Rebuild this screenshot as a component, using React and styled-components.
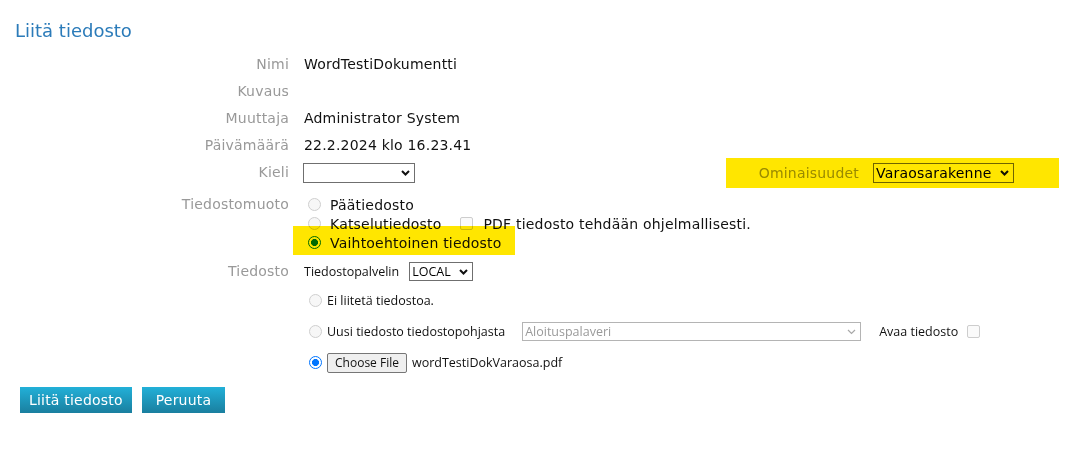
import React from 'react';
import styled, { createGlobalStyle, css } from 'styled-components';

const GlobalStyle = createGlobalStyle`
  html, body {
    margin: 0;
    background: #fff;
  }
  body {
    font-family: "DejaVu Sans", Verdana, sans-serif;
    font-size: 14px;
    letter-spacing: 0.2px;
    color: #111;
  }
`;

const Page = styled.div`
  width: 1069px;
  height: 469px;
  overflow: hidden;
`;

const Title = styled.h1`
  margin: 0;
  padding: 21px 15px 0;
  font-size: 18px;
  font-weight: normal;
  letter-spacing: 0;
  line-height: 19px;
  color: #2b7bb9;
`;

const Form = styled.div`
  margin-top: 11px;
`;

const Row = styled.div`
  display: grid;
  grid-template-columns: 289px 1fr;
  column-gap: 15px;
  align-items: ${p => (p.$top ? 'start' : 'center')};
  min-height: 27px;
  padding: ${p => p.$pad || '0'};
  padding-right: 10px;
`;

const Label = styled.div`
  text-align: right;
  color: #999;
  line-height: ${p => p.$lh || 27}px;
  white-space: nowrap;
`;

const Value = styled.div`
  line-height: 27px;
  white-space: nowrap;
`;

const Split = styled.div`
  display: flex;
  align-items: center;
  justify-content: space-between;
  margin-left: -1px;
`;

const highlight = css`
  position: relative;
  &::after {
    content: '';
    position: absolute;
    background: #ffe600;
    mix-blend-mode: multiply;
    pointer-events: none;
  }
`;

const PropsBox = styled.div`
  ${highlight}
  display: flex;
  align-items: center;
  gap: 14px;
  height: 27px;
  padding: 0 45px 0 33px;
  color: #999;
  &::after {
    inset: -1px 0 -2px 0;
  }
`;

const Options = styled.div`
  display: flex;
  flex-direction: column;
`;

const Option = styled.label`
  display: flex;
  align-items: center;
  height: 19px;
  white-space: nowrap;
  ${p =>
    p.$marked &&
    css`
      ${highlight}
      &::after {
        left: -11px;
        top: -7px;
        width: 222px;
        height: 29px;
      }
    `}
`;

const Radio = styled.input.attrs({ type: 'radio' })`
  appearance: none;
  box-sizing: border-box;
  width: 13px;
  height: 13px;
  margin: 0 ${p => (p.$small ? 5 : 9)}px 0 ${p => (p.$small ? 5 : 4)}px;
  border-radius: 50%;
  border: 1px solid #cfcfcf;
  background: #f7f7f7;
  flex: none;
  &:checked {
    border: 1.5px solid #0075ff;
    background: radial-gradient(circle, #0075ff 0 3.2px, #fff 3.8px);
  }
`;

const Check = styled.input.attrs({ type: 'checkbox' })`
  appearance: none;
  box-sizing: border-box;
  width: 13px;
  height: 13px;
  margin: 0 ${p => p.$right || 0}px 0 ${p => p.$left || 0}px;
  border-radius: 2px;
  border: 1px solid #cdcdcd;
  background: #fafafa;
  flex: none;
`;

const SelectWrap = styled.span`
  position: relative;
  display: inline-flex;
  align-items: center;
  margin-left: ${p => p.$left || 0}px;
  svg {
    position: absolute;
    right: 5px;
    top: 50%;
    transform: translateY(-50%);
    pointer-events: none;
  }
`;

const Select = styled.select`
  appearance: none;
  box-sizing: border-box;
  width: ${p => p.$w}px;
  height: ${p => p.$h || 20}px;
  margin: 0;
  padding: 0 18px 0 ${p => p.$padLeft ?? 2}px;
  border: 1px solid ${p => (p.disabled ? '#b4b4b4' : '#6f6f6f')};
  border-radius: 0;
  background: #fff;
  font-family: ${p => (p.$small ? '"Open Sans", sans-serif' : 'inherit')};
  font-size: ${p => (p.$small ? 12.5 : 14)}px;
  letter-spacing: ${p => (p.$small ? 0 : 0.2)}px;
  color: ${p => (p.disabled ? '#9a9a9a' : '#000')};
  opacity: 1;
`;

const Chevron = ({ light }) => (
  <svg width="9" height="6" viewBox="0 0 9 6">
    <path
      d="M1 1 L4.5 4.5 L8 1"
      fill="none"
      stroke={light ? '#a8a8a8' : '#111'}
      strokeWidth={light ? 1.2 : 2}
    />
  </svg>
);

const FileArea = styled.div`
  display: flex;
  flex-direction: column;
  font-family: "Open Sans", sans-serif;
  font-size: 12.5px;
  letter-spacing: 0;
`;

const FileHead = styled.div`
  display: flex;
  align-items: center;
  height: 27px;
  gap: 10px;
`;

const FileLine = styled.label`
  display: flex;
  align-items: center;
  height: 31px;
  white-space: nowrap;
`;

const Hint = styled.span`
  margin-left: 18px;
  margin-right: 9px;
`;

const PickButton = styled.span`
  display: inline-flex;
  align-items: center;
  justify-content: center;
  box-sizing: border-box;
  width: 80px;
  height: 20px;
  margin-right: 5px;
  border: 1px solid #767676;
  border-radius: 2px;
  background: #efefef;
  font-size: 12px;
`;

const Actions = styled.div`
  display: flex;
  gap: 10px;
  padding: 9px 0 0 20px;
`;

const Button = styled.button`
  height: 26px;
  padding: 0 ${p => p.$pad || 9}px;
  border: 0;
  border-radius: 0;
  background: linear-gradient(#22b0d8, #1a7f9f);
  color: #fff;
  font-family: "DejaVu Sans", Verdana, sans-serif;
  font-size: 14px;
  letter-spacing: 0.2px;
  cursor: pointer;
`;

export default function App() {
  return (
    <Page>
      <GlobalStyle />
      <Title>Liitä tiedosto</Title>
      <Form>
        <Row>
          <Label>Nimi</Label>
          <Value>WordTestiDokumentti</Value>
        </Row>
        <Row>
          <Label>Kuvaus</Label>
          <Value />
        </Row>
        <Row>
          <Label>Muuttaja</Label>
          <Value>Administrator System</Value>
        </Row>
        <Row>
          <Label>Päivämäärä</Label>
          <Value>22.2.2024 klo 16.23.41</Value>
        </Row>
        <Row>
          <Label>Kieli</Label>
          <Split>
            <SelectWrap>
              <Select $w={112} defaultValue="">
                <option value="" />
              </Select>
              <Chevron />
            </SelectWrap>
            <PropsBox>
              <span>Ominaisuudet</span>
              <SelectWrap>
                <Select $w={141} defaultValue="v">
                  <option value="v">Varaosarakenne</option>
                </Select>
                <Chevron />
              </SelectWrap>
            </PropsBox>
          </Split>
        </Row>
        <Row $top $pad="9px 0 6px">
          <Label $lh={19}>Tiedostomuoto</Label>
          <Options>
            <Option>
              <Radio name="format" disabled />
              Päätiedosto
            </Option>
            <Option>
              <Radio name="format" disabled />
              Katselutiedosto
              <Check disabled $left={19} $right={10} />
              PDF tiedosto tehdään ohjelmallisesti.
            </Option>
            <Option $marked>
              <Radio name="format" defaultChecked />
              Vaihtoehtoinen tiedosto
            </Option>
          </Options>
        </Row>
        <Row $top>
          <Label>Tiedosto</Label>
          <FileArea>
            <FileHead>
              Tiedostopalvelin
              <SelectWrap>
                <Select $w={64} $h={19} $small defaultValue="l">
                  <option value="l">LOCAL</option>
                </Select>
                <Chevron />
              </SelectWrap>
            </FileHead>
            <FileLine>
              <Radio name="source" $small />
              Ei liitetä tiedostoa.
            </FileLine>
            <FileLine>
              <Radio name="source" $small />
              Uusi tiedosto tiedostopohjasta
              <SelectWrap $left={17}>
                <Select $w={339} $h={19} $small disabled defaultValue="a">
                  <option value="a">Aloituspalaveri</option>
                </Select>
                <Chevron light />
              </SelectWrap>
              <Hint>Avaa tiedosto</Hint>
              <Check disabled />
            </FileLine>
            <FileLine>
              <Radio name="source" $small defaultChecked />
              <PickButton>Choose File</PickButton>
              wordTestiDokVaraosa.pdf
            </FileLine>
          </FileArea>
        </Row>
      </Form>
      <Actions>
        <Button>Liitä tiedosto</Button>
        <Button $pad={14}>Peruuta</Button>
      </Actions>
    </Page>
  );
}
